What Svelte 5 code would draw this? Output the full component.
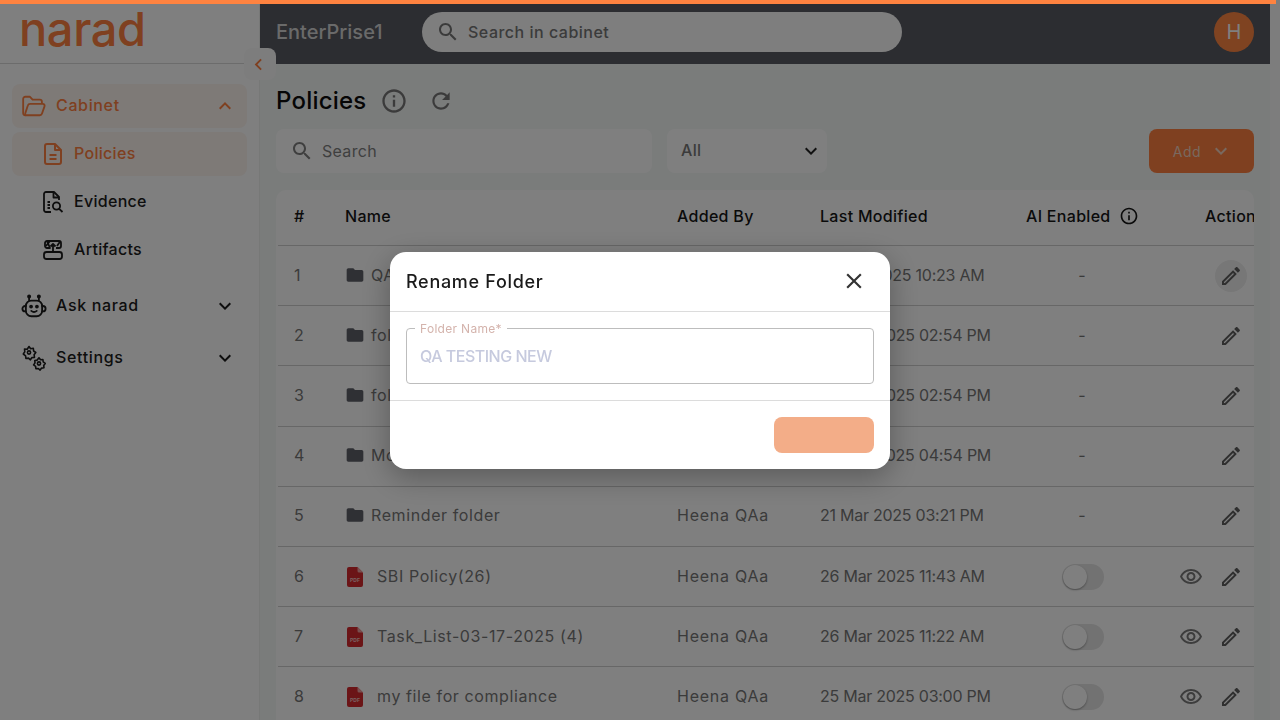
<script>
  const icons = {
    search: "M15.5 14h-.79l-.28-.27C15.41 12.59 16 11.11 16 9.5 16 5.91 13.09 3 9.5 3S3 5.91 3 9.5 5.91 16 9.5 16c1.61 0 3.09-.59 4.23-1.57l.27.28v.79l5 4.99L20.49 19l-4.99-5zm-6 0C7.01 14 5 11.99 5 9.5S7.01 5 9.5 5 14 7.01 14 9.5 11.99 14 9.5 14z",
    edit: "M14.06 9.02l.92.92L5.92 19H5v-.92l9.06-9.06M17.66 3c-.25 0-.51.1-.7.29l-1.83 1.83 3.75 3.75 1.83-1.83c.39-.39.39-1.02 0-1.41l-2.34-2.34c-.2-.2-.45-.29-.71-.29zm-3.6 3.19L3 17.25V21h3.75L17.81 9.94l-3.75-3.75z",
    eye: "M12 6c3.79 0 7.17 2.13 8.82 5.5C19.17 14.87 15.79 17 12 17s-7.17-2.13-8.82-5.5C4.83 8.13 8.21 6 12 6m0-2C7 4 2.73 7.11 1 11.5 2.73 15.89 7 19 12 19s9.27-3.11 11-7.5C21.27 7.11 17 4 12 4zm0 5c1.38 0 2.5 1.12 2.5 2.5S13.38 14 12 14s-2.5-1.12-2.5-2.5S10.62 9 12 9m0-2c-2.48 0-4.5 2.02-4.5 4.5S9.52 16 12 16s4.5-2.02 4.5-4.5S14.48 7 12 7z",
    folder: "M10 4H4c-1.1 0-1.99.9-1.99 2L2 18c0 1.1.9 2 2 2h16c1.1 0 2-.9 2-2V8c0-1.1-.9-2-2-2h-8l-2-2z",
    info: "M11 7h2v2h-2zm0 4h2v6h-2zm1-9C6.48 2 2 6.48 2 12s4.48 10 10 10 10-4.48 10-10S17.52 2 12 2zm0 18c-4.41 0-8-3.59-8-8s3.59-8 8-8 8 3.59 8 8-3.59 8-8 8z",
    refresh: "M17.65 6.35C16.2 4.9 14.21 4 12 4c-4.42 0-7.99 3.58-7.99 8s3.57 8 7.99 8c3.73 0 6.84-2.55 7.73-6h-2.08c-.82 2.33-3.04 4-5.65 4-3.31 0-6-2.69-6-6s2.69-6 6-6c1.66 0 3.14.69 4.22 1.78L13 11h7V4l-2.35 2.35z",
    close: "M19 6.41 17.59 5 12 10.59 6.41 5 5 6.41 10.59 12 5 17.59 6.41 19 12 13.41 17.59 19 19 17.59 13.41 12z",
    more: "M16.59 8.59 12 13.17 7.41 8.59 6 10l6 6 6-6z",
    less: "m12 8-6 6 1.41 1.41L12 10.83l4.59 4.58L18 14z",
    left: "M15.41 7.41 14 6l-6 6 6 6 1.41-1.41L10.83 12z"
  };

  const rows = [
    { kind: "folder", name: "QA TESTING NEW", by: "Heena QAa", date: "21 Mar 2025 10:23 AM" },
    { kind: "folder", name: "folder testing", by: "Heena QAa", date: "26 Mar 2025 02:54 PM" },
    { kind: "folder", name: "folder demo", by: "Heena QAa", date: "26 Mar 2025 02:54 PM" },
    { kind: "folder", name: "Monthly reports", by: "Heena QAa", date: "25 Mar 2025 04:54 PM" },
    { kind: "folder", name: "Reminder folder", by: "Heena QAa", date: "21 Mar 2025 03:21 PM" },
    { kind: "pdf", name: "SBI Policy(26)", by: "Heena QAa", date: "26 Mar 2025 11:43 AM" },
    { kind: "pdf", name: "Task_List-03-17-2025 (4)", by: "Heena QAa", date: "26 Mar 2025 11:22 AM" },
    { kind: "pdf", name: "my file for compliance", by: "Heena QAa", date: "25 Mar 2025 03:00 PM" }
  ];
</script>

{#snippet icon(d, size = 24)}
  <svg width={size} height={size} viewBox="0 0 24 24" fill="currentColor"><path {d} /></svg>
{/snippet}

<div class="bar"></div>

<div class="app">
  <aside class="sidebar">
    <div class="logo"><span>narad</span></div>
    <button class="collapse">{@render icon(icons.left, 23)}</button>
    <nav>
      <div class="item open">
        <svg class="lead" width="26" height="26" viewBox="0 0 24 24" fill="none" stroke="currentColor" stroke-width="1.7" stroke-linejoin="round">
          <path d="M4.5 20.5H4a2 2 0 0 1-2-2V5.5a2 2 0 0 1 2-2h4.3l2.4 2.6h6.6a2 2 0 0 1 2 2V10" />
          <path d="M4.5 20.5h12.8a2.2 2.2 0 0 0 2.1-1.6l2.3-6.6a1.7 1.7 0 0 0-1.6-2.3H8.4a2.2 2.2 0 0 0-2.1 1.6L4 18.6a1.5 1.5 0 0 0 .5 1.9z" />
        </svg>
        <span>Cabinet</span>
        <i class="chev">{@render icon(icons.less)}</i>
      </div>
      <div class="sub active">
        <svg width="24" height="24" viewBox="0 0 24 24" fill="none" stroke="currentColor" stroke-width="2" stroke-linejoin="round">
          <path d="M14 2H6a2 2 0 0 0-2 2v16a2 2 0 0 0 2 2h12a2 2 0 0 0 2-2V8z" />
          <path d="M14 2v6h6M8.5 13h7M8.5 17h7" />
        </svg>
        <span>Policies</span>
      </div>
      <div class="sub">
        <svg width="24" height="24" viewBox="0 0 24 24" fill="none" stroke="currentColor" stroke-width="1.8" stroke-linejoin="round">
          <path d="M10 22H5a2 2 0 0 1-2-2V4a2 2 0 0 1 2-2h8l5 5v3" />
          <path d="M12.5 2v5.5H18M6.5 12H9M6.5 15H9M6.5 18H9" />
          <circle cx="15.5" cy="16" r="3.6" />
          <path d="m18.2 18.8 3.3 3.2" />
        </svg>
        <span>Evidence</span>
      </div>
      <div class="sub">
        <svg width="24" height="24" viewBox="0 0 24 24" fill="none" stroke="currentColor" stroke-width="1.8" stroke-linejoin="round">
          <path d="M6 3h12a2 2 0 0 1 2 2v3a2 2 0 0 1-2 2h-3M9 10H6a2 2 0 0 1-2-2V5a2 2 0 0 1 2-2z" />
          <rect x="3" y="14" width="18" height="7" rx="2.5" />
          <path d="M12 14V6.5M9.5 8.5 12 6l2.5 2.5M5 8l4-5M16 8l3.5-5" />
        </svg>
        <span>Artifacts</span>
      </div>
      <div class="item second">
        <svg class="lead" width="26" height="26" viewBox="0 0 24 24" fill="none" stroke="currentColor" stroke-width="1.7" stroke-linecap="round">
          <rect x="4.5" y="7" width="15" height="14.5" rx="5" />
          <path d="M7.5 7V4.5M16.5 7V4.5M4.5 12H3.8a1.8 1.8 0 0 0 0 5h.7M19.5 12h.7a1.8 1.8 0 0 1 0 5h-.7M9.5 16.5c1.4 1.2 3.6 1.2 5 0" />
          <circle cx="7.5" cy="3.3" r="1" fill="currentColor" />
          <circle cx="16.5" cy="3.3" r="1" fill="currentColor" />
          <circle cx="9.3" cy="12.5" r=".9" fill="currentColor" />
          <circle cx="14.7" cy="12.5" r=".9" fill="currentColor" />
        </svg>
        <span>Ask narad</span>
        <i class="chev">{@render icon(icons.more)}</i>
      </div>
      <div class="item third">
        <svg class="lead" width="26" height="26" viewBox="0 0 26 26" fill="none" stroke="currentColor" stroke-width="1.6" stroke-linejoin="round">
          <circle cx="8" cy="7.5" r="1.6" />
          <path d="M8 1.5l1.6 2.3 2.7-.6.3 2.8 2.2 1.5-1.7 2.2.4 2.7-2.7.2-1.4 2.2-1.9-1.7-2.6.4-.3-2.7L2.3 9l1.5-2.2-.3-2.8 2.7.2z" />
          <circle cx="18" cy="18.5" r="1.6" />
          <path d="M18 12.8l1.5 2 2.4-.3.3 2.4 2 1.5-1.5 2 .3 2.4-2.4.3-1.5 2-1.8-1.6-2.4.2-.3-2.4-2-1.4 1.4-2-.2-2.4 2.4-.4z" />
        </svg>
        <span>Settings</span>
        <i class="chev">{@render icon(icons.more)}</i>
      </div>
    </nav>
  </aside>

  <div class="main">
    <header>
      <div class="org">EnterPrise1</div>
      <div class="global-search">
        {@render icon(icons.search)}
        <span>Search in cabinet</span>
      </div>
      <div class="avatar">H</div>
    </header>

    <section class="content">
      <div class="title-row">
        <h1>Policies</h1>
        <i class="title-info">{@render icon(icons.info, 28)}</i>
        <i class="title-refresh">{@render icon(icons.refresh, 26)}</i>
      </div>

      <div class="filters">
        <div class="field search">
          {@render icon(icons.search)}
          <span>Search</span>
        </div>
        <div class="field select">
          <span>All</span>
          {@render icon(icons.more)}
        </div>
        <button class="add">
          <span>Add</span>
          {@render icon(icons.more)}
        </button>
      </div>

      <div class="card">
        <div class="row head">
          <div>#</div>
          <div>Name</div>
          <div>Added By</div>
          <div>Last Modified</div>
          <div class="ai-head">AI Enabled {@render icon(icons.info, 20)}</div>
          <div class="action-head">Actions</div>
        </div>
        {#each rows as row, i}
          <div class="row">
            <div>{i + 1}</div>
            <div class="name">
              {#if row.kind === "folder"}
                <i class="folder">{@render icon(icons.folder, 20)}</i>
              {:else}
                <svg class="pdf" width="16" height="20" viewBox="0 0 16 20">
                  <path d="M2 0h8.5L16 5.5V18a2 2 0 0 1-2 2H2a2 2 0 0 1-2-2V2a2 2 0 0 1 2-2z" fill="#d62a2e" />
                  <path d="M10.5 0 16 5.5h-4a1.5 1.5 0 0 1-1.5-1.5z" fill="#f0a0a0" />
                  <text x="8" y="15" text-anchor="middle">PDF</text>
                </svg>
              {/if}
              <span class="label">{row.name}</span>
            </div>
            <div class="by">{row.by}</div>
            <div class="date">{row.date}</div>
            <div class="ai">
              {#if row.kind === "folder"}
                <span>-</span>
              {:else}
                <span class="toggle"><span class="thumb"></span></span>
              {/if}
            </div>
            <div class="actions">
              {#if row.kind === "pdf"}
                <i class="act">{@render icon(icons.eye)}</i>
              {/if}
              <i class="act pencil" class:hover={i === 0}>{@render icon(icons.edit)}</i>
            </div>
          </div>
        {/each}
      </div>
    </section>
  </div>

  <div class="gutter"></div>
</div>

<div class="overlay">
  <div class="modal">
    <div class="modal-head">
      <h2>Rename Folder</h2>
      <i class="close">{@render icon(icons.close, 26)}</i>
    </div>
    <div class="modal-body">
      <fieldset>
        <legend>Folder Name*</legend>
        <span>QA TESTING NEW</span>
      </fieldset>
    </div>
    <div class="modal-foot">
      <button class="save" aria-label="Save"></button>
    </div>
  </div>
</div>

<style>
  :global(body) {
    margin: 0;
    overflow: hidden;
    font-family: "Inter", "Liberation Sans", sans-serif;
  }

  i {
    font-style: normal;
    display: inline-flex;
  }

  .bar {
    position: fixed;
    top: 0;
    left: 0;
    width: 1276px;
    height: 4px;
    background: #ff8340;
    z-index: 30;
  }

  .app {
    display: grid;
    grid-template-columns: 260px 1010px 10px;
    height: 720px;
    overflow: hidden;
  }

  .gutter {
    background: #fafafa;
  }

  .sidebar {
    position: relative;
    background: #fff;
    border-right: 1px solid #eef0ef;
    box-sizing: border-box;
    z-index: 2;
  }

  .logo {
    height: 64px;
    box-sizing: border-box;
    border-bottom: 1px solid #d8d8d8;
    padding: 0 0 0 19px;
    display: flex;
    align-items: center;
  }

  .logo span {
    font-size: 47px;
    font-weight: 500;
    line-height: 56px;
    color: #ff8040;
    letter-spacing: -0.4px;
    margin-top: -6px;
  }

  .collapse {
    position: absolute;
    left: 244px;
    top: 48px;
    width: 32px;
    height: 32px;
    border: 0;
    padding: 0 3px 0 0;
    border-radius: 8px;
    background: #fafafa;
    color: #ff8040;
    display: flex;
    align-items: center;
    justify-content: center;
    z-index: 3;
  }

  nav {
    padding: 20px 12px 0;
    display: flex;
    flex-direction: column;
    width: 235px;
  }

  .item,
  .sub {
    display: flex;
    align-items: center;
    height: 44px;
    font-size: 16px;
    font-weight: 500;
    letter-spacing: 0.3px;
    color: #1c1c1c;
    border-radius: 8px;
  }

  .item span,
  .sub span {
    margin-top: -2px;
  }

  .item {
    padding: 0 10px;
    gap: 10px;
    letter-spacing: 0.65px;
  }

  .item .lead {
    margin-left: -1px;
    margin-right: -1px;
    flex: none;
  }

  .chev {
    margin-left: auto;
  }

  .open {
    background: #fcf4ef;
    color: #ff8040;
  }

  .sub {
    padding-left: 29px;
    gap: 9px;
    margin-top: 4px;
  }

  .active {
    background: #fcf4ef;
    color: #ff8040;
  }

  .second {
    margin-top: 12px;
  }

  .third {
    margin-top: 8px;
  }

  .main {
    background: #f5f8f7;
    display: flex;
    flex-direction: column;
    min-width: 0;
  }

  header {
    height: 60px;
    margin-top: 4px;
    background: #585a62;
    display: flex;
    align-items: center;
    padding: 0 16px 4px;
    box-sizing: border-box;
    flex: none;
  }

  .org {
    width: 146px;
    font-size: 20px;
    font-weight: 500;
    color: #d4d4d4;
  }

  .global-search {
    width: 480px;
    height: 40px;
    border-radius: 20px;
    background: #fcfcfc;
    display: flex;
    align-items: center;
    gap: 8px;
    padding-left: 14px;
    box-sizing: border-box;
    color: #777;
    font-size: 16px;
    font-weight: 500;
    letter-spacing: 0.5px;
  }

  .avatar {
    margin-left: auto;
    width: 40px;
    height: 40px;
    border-radius: 50%;
    background: #ff8643;
    color: #fff;
    font-size: 20px;
    display: flex;
    align-items: center;
    justify-content: center;
  }

  .content {
    padding: 0 16px;
    flex: 1;
    min-height: 0;
  }

  .title-row {
    height: 65px;
    display: flex;
    align-items: center;
    padding-top: 9px;
    box-sizing: border-box;
    color: #777;
  }

  h1 {
    margin: -2px 13px 0 0;
    font-size: 24px;
    font-weight: 500;
    color: #0c0c0c;
    letter-spacing: 0.2px;
    width: 91px;
  }

  .title-refresh {
    margin-left: 20px;
  }

  .filters {
    display: flex;
    align-items: stretch;
    height: 44px;
    margin-bottom: 17px;
  }

  .field {
    background: #fff;
    border-radius: 8px;
    display: flex;
    align-items: center;
    box-sizing: border-box;
    color: #7e7e7e;
    font-size: 16px;
    letter-spacing: 0.3px;
  }

  .search {
    width: 376px;
    padding-left: 14px;
    gap: 8px;
  }

  .select {
    width: 160px;
    margin-left: 15px;
    padding: 0 4px 0 14px;
    justify-content: space-between;
    font-weight: 500;
    color: #777;
  }

  .select span {
    margin-top: -2px;
  }

  .select svg {
    color: #222;
  }

  .add {
    margin-left: auto;
    width: 105px;
    background: #ff8040;
    color: #f2d2bf;
    border: 0;
    border-radius: 8px;
    display: flex;
    align-items: center;
    justify-content: center;
    gap: 8px;
    padding: 0 0 0 3px;
    font: inherit;
    font-size: 14px;
    letter-spacing: 0.5px;
  }

  .card {
    background: #fff;
    border-radius: 10px 10px 0 0;
    padding-left: 2px;
    overflow: hidden;
    width: 978px;
    box-sizing: border-box;
  }

  .row {
    display: grid;
    grid-template-columns: 51px 332px 143px 206px 144px 100px;
    align-items: center;
    height: 60.2px;
    border-bottom: 1px solid #cfcfcf;
    box-sizing: border-box;
    font-size: 16px;
    letter-spacing: 0.3px;
    color: #767676;
    white-space: nowrap;
  }

  .row > div {
    padding-left: 16px;
    padding-bottom: 2px;
    box-sizing: border-box;
    min-width: 0;
  }

  .head {
    height: 56px;
    font-weight: 500;
    color: #171717;
  }

  .row.head > div {
    padding-bottom: 4px;
  }

  .ai-head {
    display: flex;
    align-items: center;
    gap: 8px;
    width: 200px;
  }

  .row > .action-head {
    padding-left: 51px;
  }

  .row > .name {
    display: flex;
    align-items: center;
    overflow: hidden;
    letter-spacing: 0.6px;
  }

  .by {
    letter-spacing: 0.75px;
  }

  .date {
    letter-spacing: -0.25px;
  }

  .folder {
    color: #5e6068;
    margin-right: 6px;
  }

  .pdf {
    margin: 2px 14px 0 2px;
    flex: none;
  }

  .pdf text {
    font-size: 5px;
    font-weight: 700;
    letter-spacing: 0;
    fill: #f3c4c4;
  }

  .row > .ai {
    padding-left: 0;
    display: flex;
    justify-content: center;
    align-items: center;
  }

  .toggle {
    display: block;
    width: 42px;
    height: 26px;
    border-radius: 13px;
    background: #e4e4e4;
    padding: 1px;
    box-sizing: border-box;
    margin: 2px 0 0 2px;
  }

  .thumb {
    display: block;
    width: 24px;
    height: 24px;
    border-radius: 50%;
    background: #fff;
    box-shadow: 0 1px 2px rgba(0, 0, 0, 0.35);
  }

  .row > .actions {
    display: flex;
    justify-content: flex-end;
    align-items: center;
    gap: 8px;
    padding: 0 7px 0 0;
  }

  .act {
    width: 32px;
    height: 32px;
    border-radius: 50%;
    align-items: center;
    justify-content: center;
    color: #7a7a7a;
  }

  .pencil {
    color: #5e5e5e;
  }

  .hover {
    background: #eeeeee;
  }

  .overlay {
    position: fixed;
    inset: 0;
    background: rgba(0, 0, 0, 0.5);
    display: flex;
    align-items: center;
    justify-content: center;
    z-index: 20;
  }

  .modal {
    width: 500px;
    background: #fff;
    border-radius: 16px;
    box-shadow: 0 8px 30px rgba(0, 0, 0, 0.3);
    overflow: hidden;
  }

  .modal-head {
    height: 60px;
    border-bottom: 1px solid #dcdcdc;
    box-sizing: border-box;
    display: flex;
    align-items: center;
    justify-content: space-between;
    padding: 0 23px 0 16px;
  }

  h2 {
    margin: 0;
    font-size: 18px;
    font-weight: 500;
    color: #1a1a1a;
    letter-spacing: 0.7px;
  }

  .close {
    color: #333;
  }

  .modal-body {
    padding: 11px 16px 0;
    height: 89px;
    box-sizing: border-box;
    border-bottom: 1px solid #dcdcdc;
  }

  fieldset {
    margin: 0;
    padding: 0 13px;
    height: 61px;
    box-sizing: border-box;
    border: 1px solid #bdbdbd;
    border-radius: 4px;
    display: flex;
    align-items: center;
    font-size: 16px;
    font-weight: 500;
    letter-spacing: -0.5px;
    color: #c6cade;
  }

  fieldset span {
    display: block;
    line-height: 56px;
    margin-top: -6px;
  }

  legend {
    padding: 0 5px;
    margin-left: -5px;
    font-size: 12px;
    font-weight: 400;
    line-height: 12px;
    color: #d4b3ac;
    letter-spacing: 0.3px;
  }

  .modal-foot {
    padding: 16px;
    display: flex;
    justify-content: flex-end;
  }

  .save {
    width: 100px;
    height: 36px;
    border: 0;
    border-radius: 8px;
    background: #f3ad88;
  }
</style>
